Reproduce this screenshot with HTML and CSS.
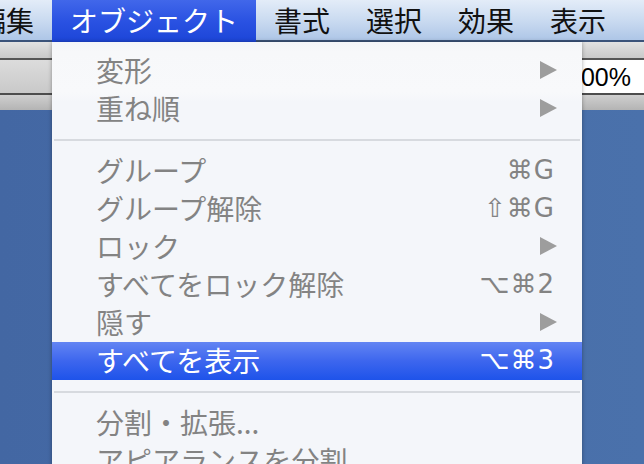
FILE: index.html
```html
<!DOCTYPE html>
<html lang="ja">
<head>
<meta charset="utf-8">
<title>オブジェクト メニュー</title>
<link rel="stylesheet" href="styles.css">
</head>
<body>
<div class="screen">
  <div class="menubar">
    <span class="mb-item first">編集</span>
    <span class="mb-item active">オブジェクト</span>
    <span class="mb-item">書式</span>
    <span class="mb-item">選択</span>
    <span class="mb-item">効果</span>
    <span class="mb-item">表示</span>
  </div>
  <div class="toolbar">
    <div class="tb-top"></div>
    <div class="tb-mid"><div class="zoom-field">100%</div></div>
    <div class="tb-bottom"></div>
  </div>
  <div class="canvas"></div>

  <div class="menu">
    <div class="mi"><span class="label">変形</span><svg class="arrow" width="17" height="18" viewBox="0 0 17 18"><polygon points="0,0 17,9 0,18"/></svg></div>
    <div class="mi"><span class="label">重ね順</span><svg class="arrow" width="17" height="18" viewBox="0 0 17 18"><polygon points="0,0 17,9 0,18"/></svg></div>
    <div class="sep"></div>
    <div class="mi"><span class="label">グループ</span><span class="key">⌘G</span></div>
    <div class="mi"><span class="label">グループ解除</span><span class="key">⇧⌘G</span></div>
    <div class="mi"><span class="label">ロック</span><svg class="arrow" width="17" height="18" viewBox="0 0 17 18"><polygon points="0,0 17,9 0,18"/></svg></div>
    <div class="mi"><span class="label">すべてをロック解除</span><span class="key">⌥⌘2</span></div>
    <div class="mi"><span class="label">隠す</span><svg class="arrow" width="17" height="18" viewBox="0 0 17 18"><polygon points="0,0 17,9 0,18"/></svg></div>
    <div class="mi selected"><span class="label">すべてを表示</span><span class="key">⌥⌘3</span></div>
    <div class="sep"></div>
    <div class="mi"><span class="label">分割・拡張...</span></div>
    <div class="mi"><span class="label">アピアランスを分割</span></div>
  </div>
</div>
</body>
</html>
```
FILE: styles.css
```css
html, body {
  margin: 0;
  padding: 0;
}
body {
  width: 644px;
  height: 464px;
  overflow: hidden;
  background: #4569a5;
  font-family: "Noto Sans CJK JP", "Noto Sans", sans-serif;
}
.screen {
  position: relative;
  width: 644px;
  height: 464px;
  overflow: hidden;
  display: flex;
  flex-direction: column;
}

/* menubar */
.menubar {
  height: 42px;
  display: flex;
  flex-shrink: 0;
  background:
    linear-gradient(to bottom, transparent 40px, #3b537a 40px),
    linear-gradient(to bottom, #e3ecf8 0%, #c9daf0 50%, #abc4e6 100%);
}
.mb-item {
  height: 42px;
  line-height: 40px;
  padding: 0 18px;
  font-size: 28px;
  color: #111;
  white-space: nowrap;
}
.mb-item.first {
  margin-left: -40px;
}
.mb-item.active {
  color: #fff;
  background: linear-gradient(to bottom, #4167ea 0%, #2a52e2 50%, #1c45d8 100%);
}

/* toolbar behind menu */
.toolbar {
  height: 68px;
  flex-shrink: 0;
  display: flex;
  flex-direction: column;
}
.tb-top {
  height: 16px;
  background: linear-gradient(to bottom, #e2e2e2, #c9c9c9);
  border-bottom: 2px solid #555;
}
.tb-mid {
  height: 33px;
  background: linear-gradient(to bottom, #dcdcdc, #c9c9c9);
  border-bottom: 2px solid #4d4d4d;
  display: flex;
  justify-content: flex-end;
}
.zoom-field {
  width: 87px;
  flex-shrink: 0;
  background: #fff;
  font-family: "Liberation Sans", Arial, sans-serif;
  font-size: 25px;
  line-height: 35px;
  padding-left: 0;
  color: #000;
  white-space: nowrap;
  overflow: hidden;
  margin-right: -10px;
}
.tb-bottom {
  flex: 1;
  background: linear-gradient(to bottom, #cfcfcf, #b4b4b4);
}
.canvas {
  flex: 1;
  background: linear-gradient(to right, #4367a3, #4a71ab);
}

/* dropdown menu (overlay) */
.menu {
  position: absolute;
  left: 52px;
  top: 42px;
  width: 530px;
  height: 460px;
  padding-top: 10px;
  box-sizing: border-box;
  background:
    linear-gradient(to bottom, #f3f5f9 0px, #f7f8fa 10px, #f8f9fb 50px, #f4f6fa 60px, #f4f6fa 100%);
  box-shadow: 0 0 4px rgba(0, 0, 0, 0.35);
}
.mi {
  height: 38px;
  display: flex;
  align-items: center;
  justify-content: space-between;
  padding: 0 27px 0 44px;
  font-size: 28px;
  color: #838383;
  white-space: nowrap;
}
.label {
  line-height: 38px;
  margin-top: -3px;
}
.key {
  font-family: "DejaVu Sans", sans-serif;
  font-size: 26px;
  line-height: 38px;
  margin-top: -2px;
  letter-spacing: 1px;
}
.arrow {
  fill: #9d9d9d;
  margin-right: -2px;
  margin-top: -2px;
}
.mi.selected {
  color: #fff;
  background: linear-gradient(to bottom, #6385f3 0%, #3d66ee 50%, #1e53ea 100%);
}
.sep {
  height: 24px;
  display: flex;
  align-items: center;
  padding: 0 2px;
}
.sep::before {
  content: "";
  display: block;
  flex: 1;
  height: 2px;
  background: #d7dadf;
}
```
